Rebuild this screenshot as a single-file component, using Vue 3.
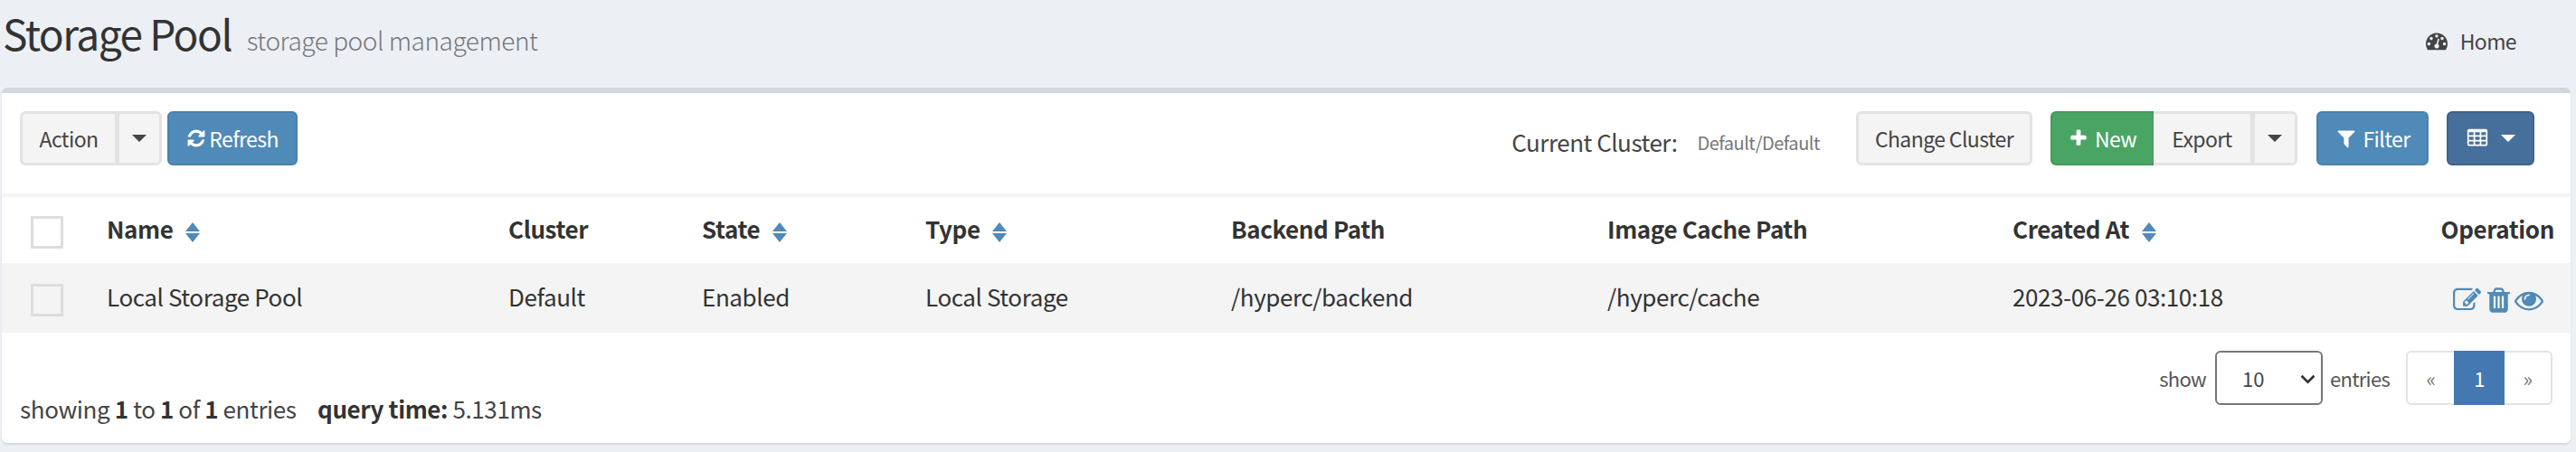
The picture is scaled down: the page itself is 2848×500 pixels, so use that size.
<template>
  <div class="page">
    <header class="page-header">
      <h1 class="page-title">Storage Pool <small>storage pool management</small></h1>
      <a class="home-link">
        <svg class="home-icon" viewBox="0 0 1792 1792"><path :d="icons.dashboard" /></svg>
        Home
      </a>
    </header>

    <section class="box">
      <div class="toolbar">
        <div class="toolbar-left">
          <div class="btn-group">
            <button class="btn btn-default btn-action">Action</button>
            <button class="btn btn-default btn-caret"><span class="caret" /></button>
          </div>
          <button class="btn btn-primary btn-refresh">
            <svg class="icon icon-refresh" viewBox="0 0 1792 1792"><path :d="icons.refresh" /></svg>Refresh
          </button>
        </div>
        <div class="toolbar-right">
          <span class="cluster-label">Current Cluster:</span>
          <span class="cluster-value">Default/Default</span>
          <button class="btn btn-default btn-change">Change Cluster</button>
          <div class="btn-group btn-group-new">
            <button class="btn btn-success btn-new">
              <svg class="icon icon-plus" viewBox="0 0 1792 1792"><path :d="icons.plus" /></svg>New
            </button>
            <button class="btn btn-default btn-export">Export</button>
            <button class="btn btn-default btn-caret"><span class="caret" /></button>
          </div>
          <button class="btn btn-primary btn-filter">
            <svg class="icon icon-filter" viewBox="0 0 1792 1792"><path :d="icons.filter" /></svg>Filter
          </button>
          <button class="btn btn-dark btn-columns">
            <svg class="icon icon-table" viewBox="0 0 1792 1792"><path :d="icons.table" /></svg>
            <span class="caret caret-white" />
          </button>
        </div>
      </div>

      <table class="data-table">
        <colgroup>
          <col v-for="(w, i) in colWidths" :key="i" :style="{ width: `${w}px` }" />
        </colgroup>
        <thead>
          <tr>
            <th class="check-cell"><span class="check" /></th>
            <th v-for="col in columns" :key="col.label" :class="{ 'op-cell': col.right }">
              {{ col.label }}
              <span v-if="col.sort" class="sort"><i class="sort-up" /><i class="sort-down" /></span>
            </th>
          </tr>
        </thead>
        <tbody>
          <tr v-for="row in rows" :key="row.name">
            <td class="check-cell"><span class="check" /></td>
            <td>{{ row.name }}</td>
            <td>{{ row.cluster }}</td>
            <td>{{ row.state }}</td>
            <td>{{ row.type }}</td>
            <td>{{ row.backend }}</td>
            <td>{{ row.cache }}</td>
            <td>{{ row.created }}</td>
            <td class="op-cell">
              <span class="ops">
                <svg class="op-edit" viewBox="0 0 1900 1792"><path :d="icons.edit" /></svg>
                <svg class="op-trash" viewBox="0 0 1408 1792"><path transform="translate(-192 0)" :d="icons.trash" /></svg>
                <svg class="op-eye" viewBox="0 0 1792 1792"><path :d="icons.eye" /></svg>
              </span>
            </td>
          </tr>
        </tbody>
      </table>

      <div class="table-footer">
        <div class="summary">
          showing <b>1</b> to <b>1</b> of <b>1</b> entries <b class="query">query time:</b> 5.131ms
        </div>
        <div class="paging">
          <span>show</span>
          <div class="select-wrap">
            <select class="page-size">
              <option>10</option>
              <option>25</option>
              <option>50</option>
            </select>
            <svg class="chevron" viewBox="0 0 16 10"><path d="M1.5 1.500 8 8l6.500-6.500" /></svg>
          </div>
          <span>entries</span>
          <ul class="pagination">
            <li>«</li>
            <li class="active">1</li>
            <li>»</li>
          </ul>
        </div>
      </div>
    </section>
  </div>
</template>

<script setup>
const icons = {
  dashboard: 'M384 1152q0-53-37.500-90.500t-90.500-37.500-90.500 37.500-37.500 90.500 37.500 90.500 90.500 37.500 90.500-37.500 37.500-90.500zm192-448q0-53-37.500-90.500t-90.500-37.500-90.500 37.500-37.500 90.500 37.500 90.500 90.500 37.500 90.500-37.500 37.500-90.500zm428 481l101-382q6-26-7.500-48.500t-38.500-29.500-48 6.500-30 39.500l-101 382q-60 5-107 43.500t-63 98.500q-20 77 20 146t117 89 146-20 89-117q16-60-6-117t-72-91zm660-33q0-53-37.500-90.500t-90.500-37.500-90.500 37.500-37.500 90.500 37.500 90.500 90.500 37.500 90.500-37.500 37.500-90.500zm-640-640q0-53-37.500-90.500t-90.500-37.500-90.500 37.500-37.500 90.500 37.500 90.500 90.500 37.500 90.500-37.500 37.500-90.500zm448 192q0-53-37.500-90.500t-90.500-37.500-90.500 37.500-37.500 90.500 37.500 90.500 90.500 37.500 90.500-37.500 37.500-90.500zm320 448q0 261-141 483-19 29-54 29h-1402q-35 0-54-29-141-221-141-483 0-182 71-348t191-286 286-191 348-71 348 71 286 191 191 286 71 348z',
  refresh: 'M1639 1056q0 5-1 7-64 268-268 434.500t-478 166.500q-146 0-282.500-55t-243.500-157l-129 129q-19 19-45 19t-45-19-19-45v-448q0-26 19-45t45-19h448q26 0 45 19t19 45-19 45l-137 137q71 66 161 102t187 36q134 0 250-65t186-179q11-17 53-117 8-23 30-23h192q13 0 22.500 9.500t9.500 22.500zm25-800v448q0 26-19 45t-45 19h-448q-26 0-45-19t-19-45 19-45l138-138q-148-137-349-137-134 0-250 65t-186 179q-11 17-53 117-8 23-30 23h-199q-13 0-22.500-9.500t-9.500-22.500v-7q65-268 270-434.500t480-166.500q146 0 284 55.500t245 156.500l130-129q19-19 45-19t45 19 19 45z',
  plus: 'M1600 736v192q0 40-28 68t-68 28h-416v416q0 40-28 68t-68 28h-192q-40 0-68-28t-28-68v-416h-416q-40 0-68-28t-28-68v-192q0-40 28-68t68-28h416v-416q0-40 28-68t68-28h192q40 0 68 28t28 68v416h416q40 0 68 28t28 68z',
  filter: 'M1595 295q17 41-14 70l-493 493v742q0 42-39 59-13 5-25 5-27 0-45-19l-256-256q-19-19-19-45v-486l-493-493q-31-29-14-70 17-39 59-39h1280q42 0 59 39z',
  table: 'M576 1376v-192q0-14-9-23t-23-9h-320q-14 0-23 9t-9 23v192q0 14 9 23t23 9h320q14 0 23-9t9-23zm0-384v-192q0-14-9-23t-23-9h-320q-14 0-23 9t-9 23v192q0 14 9 23t23 9h320q14 0 23-9t9-23zm512 384v-192q0-14-9-23t-23-9h-320q-14 0-23 9t-9 23v192q0 14 9 23t23 9h320q14 0 23-9t9-23zm-512-768v-192q0-14-9-23t-23-9h-320q-14 0-23 9t-9 23v192q0 14 9 23t23 9h320q14 0 23-9t9-23zm512 384v-192q0-14-9-23t-23-9h-320q-14 0-23 9t-9 23v192q0 14 9 23t23 9h320q14 0 23-9t9-23zm512 384v-192q0-14-9-23t-23-9h-320q-14 0-23 9t-9 23v192q0 14 9 23t23 9h320q14 0 23-9t9-23zm-512-768v-192q0-14-9-23t-23-9h-320q-14 0-23 9t-9 23v192q0 14 9 23t23 9h320q14 0 23-9t9-23zm512 384v-192q0-14-9-23t-23-9h-320q-14 0-23 9t-9 23v192q0 14 9 23t23 9h320q14 0 23-9t9-23zm0-384v-192q0-14-9-23t-23-9h-320q-14 0-23 9t-9 23v192q0 14 9 23t23 9h320q14 0 23-9t9-23zm128-320v1088q0 66-47 113t-113 47h-1344q-66 0-113-47t-47-113v-1088q0-66 47-113t113-47h1344q66 0 113 47t47 113z',
  edit: 'M888 1184l116-116-152-152-116 116v56h96v96h56zm440-720q-16-16-33 1l-350 350q-17 17-1 33t33-1l350-350q17-17 1-33zm80 594v190q0 119-84.500 203.500t-203.500 84.500h-832q-119 0-203.500-84.500t-84.500-203.500v-832q0-119 84.500-203.500t203.500-84.500h832q63 0 117 25 15 7 18 23 3 17-9 29l-49 49q-14 14-32 8-23-6-45-6h-832q-66 0-113 47t-47 113v832q0 66 47 113t113 47h832q66 0 113-47t47-113v-126q0-13 9-22l64-64q15-15 35-7t20 29zm-96-738l288 288-672 672h-288v-288zm444 132l-92 92-288-288 92-92q28-28 68-28t68 28l152 152q28 28 28 68t-28 68z',
  trash: 'M704 1376v-704q0-14-9-23t-23-9h-64q-14 0-23 9t-9 23v704q0 14 9 23t23 9h64q14 0 23-9t9-23zm256 0v-704q0-14-9-23t-23-9h-64q-14 0-23 9t-9 23v704q0 14 9 23t23 9h64q14 0 23-9t9-23zm256 0v-704q0-14-9-23t-23-9h-64q-14 0-23 9t-9 23v704q0 14 9 23t23 9h64q14 0 23-9t9-23zm-544-992h448l-48-117q-7-9-17-11h-317q-10 2-17 11zm928 32v64q0 14-9 23t-23 9h-96v948q0 83-47 143.500t-113 60.500h-832q-66 0-113-58.500t-47-141.500v-952h-96q-14 0-23-9t-9-23v-64q0-14 9-23t23-9h309l70-167q15-37 54-63t79-26h320q40 0 79 26t54 63l70 167h309q14 0 23 9t9 23z',
  eye: 'M1664 960q-152-236-381-353 61 104 61 225 0 185-131.500 316.500t-316.500 131.500-316.500-131.500-131.500-316.500q0-121 61-225-229 117-381 353 133 205 333.500 326.500t434.500 121.500 434.500-121.500 333.500-326.500zm-720-384q0-20-14-34t-34-14q-125 0-214.500 89.500t-89.500 214.500q0 20 14 34t34 14 34-14 14-34q0-86 61-147t147-61q20 0 34-14t14-34zm848 384q0 34-20 69-140 230-376.500 368.500t-499.500 138.500-499.500-139-376.500-368q-20-35-20-69t20-69q140-229 376.500-368t499.500-139 499.500 139 376.500 368q20 35 20 69z'
};

const colWidths = [100, 444, 214, 247, 338, 416, 448, 433, 200];

const columns = [
  { label: 'Name', sort: true },
  { label: 'Cluster' },
  { label: 'State', sort: true },
  { label: 'Type', sort: true },
  { label: 'Backend Path' },
  { label: 'Image Cache Path' },
  { label: 'Created At', sort: true },
  { label: 'Operation', right: true }
];

const rows = [
  {
    name: 'Local Storage Pool',
    cluster: 'Default',
    state: 'Enabled',
    type: 'Local Storage',
    backend: '/hyperc/backend',
    cache: '/hyperc/cache',
    created: '2023-06-26 03:10:18'
  }
];
</script>

<style>
body {
  margin: 0;
  background: #ecf0f5;
}
</style>

<style scoped>
.page {
  height: 500px;
  overflow: hidden;
  padding: 0 6px 0 2px;
  box-sizing: border-box;
  background: #ecf0f5;
  font-family: "Noto Sans CJK SC", "Source Sans Pro", sans-serif;
  font-size: 26px;
  line-height: 40px;
  letter-spacing: -0.4px;
  color: #333;
}

.page-header {
  height: 97px;
  display: flex;
  justify-content: space-between;
  padding-right: 60px;
}

.page-title {
  margin: 8px 0 0 1px;
  font-size: 46px;
  line-height: 56px;
  font-weight: 400;
  letter-spacing: -1.5px;
}

.page-title small {
  margin-left: 8px;
  font-size: 28px;
  font-weight: 300;
  letter-spacing: -0.45px;
  color: #777;
}

.home-link {
  display: flex;
  align-items: center;
  gap: 14px;
  height: 90px;
  font-size: 23px;
  letter-spacing: -0.6px;
  color: #444;
}

.home-icon {
  width: 24px;
  height: 24px;
  fill: #444;
}

.box {
  height: 393px;
  box-sizing: border-box;
  border-top: 6px solid #d2d6de;
  border-radius: 6px;
  background: #fff;
  box-shadow: 0 2px 2px rgba(0, 0, 0, 0.1);
  overflow: hidden;
}

.toolbar {
  height: 115px;
  box-sizing: border-box;
  padding: 20px 40px 0 20px;
  display: flex;
  justify-content: space-between;
  align-items: flex-start;
  border-bottom: 4px solid #f4f4f4;
}

.toolbar-left,
.toolbar-right,
.btn-group {
  display: flex;
  align-items: center;
}

.toolbar-left {
  gap: 6px;
}

.btn {
  height: 60px;
  box-sizing: border-box;
  padding: 0;
  border: 2px solid transparent;
  border-radius: 6px;
  font: inherit;
  font-size: 23px;
  line-height: 34px;
  letter-spacing: -0.6px;
  display: flex;
  align-items: center;
  justify-content: center;
}

.btn-default {
  background: #f4f4f4;
  border: 3px solid #e3e3e3;
  color: #444;
}

.btn-primary {
  background: #4f8ab8;
  border-color: #4a82ad;
  color: #fff;
}

.btn-success {
  background: #4aa564;
  border-color: #429a5b;
  color: #fff;
}

.btn-dark {
  background: #476f9b;
  border-color: #3e618a;
  color: #fff;
}

.btn-group .btn:not(:first-child) {
  border-top-left-radius: 0;
  border-bottom-left-radius: 0;
  margin-left: -1px;
}

.btn-group .btn:not(:last-child) {
  border-top-right-radius: 0;
  border-bottom-right-radius: 0;
}

.btn-group .btn-export {
  border-left: 0;
  margin-left: 0;
}

.btn-action { width: 108px; }
.btn-caret { width: 50px; }
.btn-refresh { width: 144px; }
.btn-change { width: 195px; margin-left: 40px; }
.btn-group-new { margin-left: 20px; }
.btn-new { width: 115px; }
.btn-export { width: 110px; }
.btn-filter { width: 124px; margin-left: 21px; }
.btn-columns { width: 97px; margin-left: 20px; gap: 14px; }

.caret {
  width: 0;
  height: 0;
  border-top: 8px solid #444;
  border-left: 8px solid transparent;
  border-right: 8px solid transparent;
}

.caret-white {
  border-top-color: #fff;
}

.icon {
  fill: #fff;
}

.icon-refresh { width: 22px; height: 22px; margin-right: 3px; }
.icon-plus { width: 22px; height: 22px; margin-right: 7px; }
.icon-filter { width: 24px; height: 24px; margin-right: 7px; }
.icon-table { width: 24px; height: 24px; }

.toolbar-right {
  height: 60px;
}

.cluster-label {
  padding-top: 8px;
  font-size: 26px;
  letter-spacing: -0.5px;
  color: #444;
}

.cluster-value {
  margin-left: 22px;
  padding-top: 10px;
  font-size: 20px;
  letter-spacing: -0.5px;
  color: #777;
}

.data-table {
  width: 2840px;
  table-layout: fixed;
  border-collapse: collapse;
}

.data-table th,
.data-table td {
  box-sizing: border-box;
  padding: 0 16px 3px;
  text-align: left;
  white-space: nowrap;
}

.data-table th {
  height: 73px;
  font-weight: 700;
}

.data-table td {
  height: 77px;
  background: #f4f4f4;
}

.data-table .check-cell {
  padding: 4px 16px 0;
}

.data-table th.op-cell {
  padding-right: 18px;
  text-align: right;
}

.data-table td.op-cell {
  padding-right: 30px;
  text-align: right;
}

.check {
  display: block;
  width: 36px;
  height: 36px;
  box-sizing: border-box;
  margin-left: 16px;
  border: 3px solid #ddd;
}

.sort {
  display: inline-flex;
  flex-direction: column;
  gap: 2px;
  margin-left: 8px;
  vertical-align: middle;
}

.sort i {
  width: 0;
  height: 0;
  border-left: 8px solid transparent;
  border-right: 8px solid transparent;
}

.sort-up { border-bottom: 10px solid #4f8ab8; }
.sort-down { border-top: 10px solid #4f8ab8; }

.ops {
  display: inline-flex;
  align-items: center;
  gap: 5px;
  vertical-align: middle;
}

.ops svg {
  fill: #4f8ab8;
}

.op-edit { width: 33px; height: 32px; }
.op-trash { width: 25px; height: 32px; }
.op-eye { width: 32px; height: 32px; }

.table-footer {
  display: flex;
  justify-content: space-between;
  padding: 20px 20px 0;
}

.summary {
  padding-top: 44px;
  color: #444;
}

.summary b {
  color: #333;
}

.query {
  margin-left: 18px;
}

.paging {
  display: flex;
  align-items: center;
  height: 60px;
  font-size: 22px;
  letter-spacing: -0.7px;
  color: #555;
}

.select-wrap {
  position: relative;
  margin: 0 8px 0 10px;
}

.page-size {
  display: block;
  width: 119px;
  height: 60px;
  box-sizing: border-box;
  padding-left: 28px;
  border: 2px solid #767676;
  border-radius: 6px;
  background: #fff;
  font: inherit;
  color: #444;
  appearance: none;
}

.chevron {
  position: absolute;
  top: 26px;
  right: 8px;
  width: 17px;
  height: 11px;
  fill: none;
  stroke: #333;
  stroke-width: 2.500;
}

.pagination {
  display: flex;
  height: 60px;
  margin: 0 0 0 18px;
  padding: 0;
  list-style: none;
}

.pagination li {
  width: 53px;
  box-sizing: border-box;
  display: flex;
  align-items: center;
  justify-content: center;
  border: 2px solid #e3e3e3;
  color: #777;
}

.pagination li:first-child {
  border-right: 0;
  border-radius: 6px 0 0 6px;
}

.pagination li:last-child {
  border-left: 0;
  border-radius: 0 6px 6px 0;
}

.pagination .active {
  width: 56px;
  background: #4478b0;
  border-color: #4478b0;
  color: #fff;
}
</style>
